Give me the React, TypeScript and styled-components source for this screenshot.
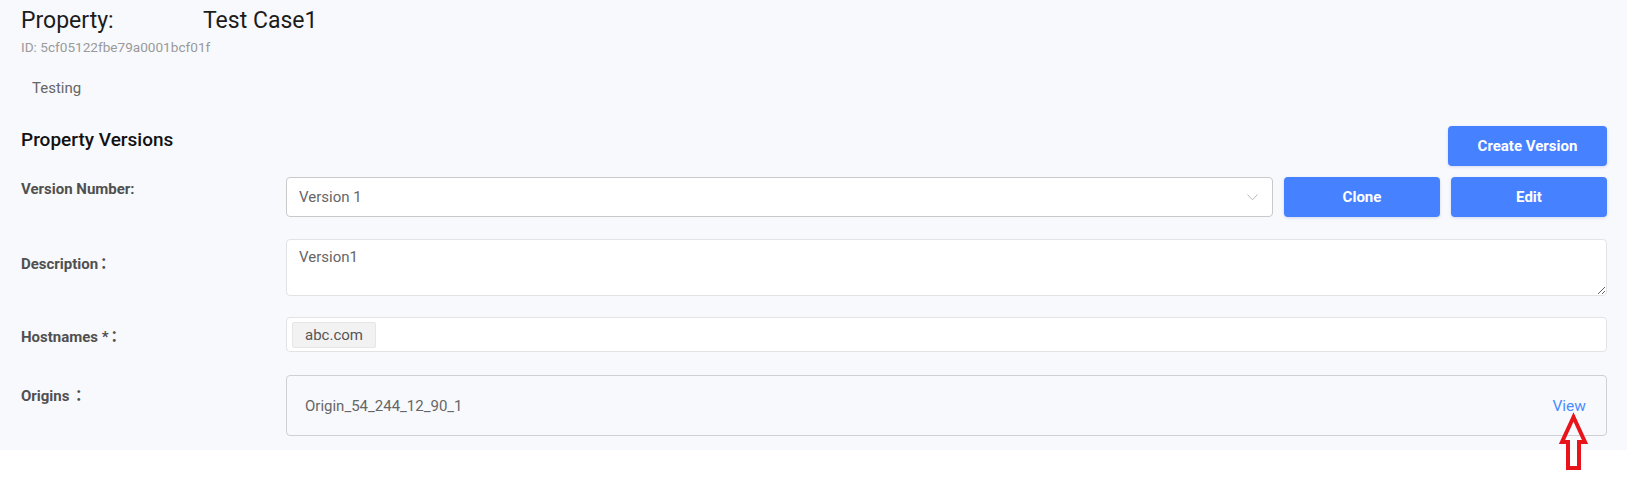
import React from "react";
import styled, { createGlobalStyle } from "styled-components";

const GlobalStyle = createGlobalStyle`
  html, body { margin: 0; padding: 0; background: #ffffff; }
  body { font-family: Roboto, "Noto Sans CJK SC", sans-serif; }
  * { box-sizing: border-box; }
`;

const Screen = styled.div`
  position: relative;
  min-height: 100vh;
  background: #ffffff;
`;

const Page = styled.div`
  background: #f8f9fd;
  padding: 7px 20px 14px 21px;
  font-family: Roboto, "Noto Sans CJK SC", sans-serif;
`;

const TitleRow = styled.div`
  display: grid;
  grid-template-columns: 182px auto;
  align-items: baseline;
`;

const TitleText = styled.span`
  font-size: 23px;
  color: #1c1c1c;
  line-height: normal;
`;

const IdText = styled.div`
  margin-top: 5px;
  font-size: 13.6px;
  color: #9a9a9a;
  line-height: normal;
`;

const Tagline = styled.div`
  margin-top: 24px;
  padding-left: 11px;
  font-size: 15px;
  color: #666;
  line-height: normal;
`;

const SectionHead = styled.div`
  margin-top: 29px;
  display: flex;
  justify-content: space-between;
  align-items: flex-start;
`;

const SectionTitle = styled.h2`
  margin: 2px 0 0;
  font-size: 19px;
  font-weight: 500;
  color: #111;
  line-height: normal;
`;

const Button = styled.button<{ $w: number }>`
  width: ${(p) => p.$w}px;
  height: 40px;
  flex: none;
  border: none;
  border-radius: 4px;
  background: #4682ff;
  color: #fff;
  font-family: Roboto, sans-serif;
  font-size: 15px;
  font-weight: 700;
  box-shadow: 0 1px 3px rgba(40, 80, 160, 0.18);
  cursor: pointer;
`;

const FormRow = styled.div<{ $mt: number }>`
  margin-top: ${(p) => p.$mt}px;
  display: grid;
  grid-template-columns: 265px 1fr;
  align-items: start;
`;

const Label = styled.label<{ $pt: number }>`
  padding-top: ${(p) => p.$pt}px;
  font-size: 15px;
  font-weight: 700;
  color: #505050;
  line-height: normal;
`;

const Colon = styled.span`
  font-family: "Noto Sans CJK TC", sans-serif;
  font-weight: 700;
  margin-left: -2px;
`;

const Field = styled.div`
  display: flex;
  gap: 11px;
  align-items: center;
`;

const Select = styled.div`
  flex: 1;
  height: 40px;
  display: flex;
  align-items: center;
  justify-content: space-between;
  padding: 0 14px 0 12px;
  background: #fff;
  border: 1px solid #c9c9c9;
  border-radius: 4px;
  font-size: 15px;
  color: #666;
`;

const TextArea = styled.textarea`
  display: block;
  width: 100%;
  height: 57px;
  padding: 8px 12px;
  background: #fff;
  border: 1px solid #e3e3e6;
  border-radius: 4px;
  font-family: Roboto, sans-serif;
  font-size: 15px;
  color: #666;
  outline: none;
  resize: vertical;
`;

const TagInput = styled.div`
  height: 35px;
  display: flex;
  align-items: center;
  gap: 6px;
  padding: 0 5px;
  background: #fff;
  border: 1px solid #e3e3e6;
  border-radius: 4px;
`;

const Tag = styled.span`
  height: 26px;
  display: inline-flex;
  align-items: center;
  padding: 0 12px;
  background: #f2f2f2;
  border: 1px solid #e6e6e6;
  border-radius: 2px;
  font-size: 15px;
  color: #555;
`;

const OriginBox = styled.div`
  height: 61px;
  display: flex;
  align-items: center;
  justify-content: space-between;
  padding: 0 20px 0 18px;
  background: #f8f9fd;
  border: 1px solid #cfd0d6;
  border-radius: 4px;
  font-size: 15px;
  color: #666;
`;

const ViewLink = styled.a`
  color: #4a8cff;
  font-size: 15.5px;
  text-decoration: none;
  cursor: pointer;
`;

const Annotation = styled.svg`
  position: absolute;
  left: 1557px;
  top: 412px;
  overflow: visible;
  z-index: 2;
`;

const Chevron = () => (
  <svg width="11" height="7" viewBox="0 0 11 7">
    <path d="M0.5 0.5 L5.5 5.8 L10.5 0.5" fill="none" stroke="#b8b8b8" strokeWidth="1" />
  </svg>
);

export default function App() {
  return (
    <Screen>
      <GlobalStyle />
      <Page>
        <TitleRow>
          <TitleText>Property:</TitleText>
          <TitleText>Test Case1</TitleText>
        </TitleRow>
        <IdText>ID: 5cf05122fbe79a0001bcf01f</IdText>
        <Tagline>Testing</Tagline>

        <SectionHead>
          <SectionTitle>Property Versions</SectionTitle>
          <Button $w={159}>Create Version</Button>
        </SectionHead>

        <FormRow $mt={11}>
          <Label $pt={3}>Version Number:</Label>
          <Field>
            <Select>
              <span>Version 1</span>
              <Chevron />
            </Select>
            <Button $w={156}>Clone</Button>
            <Button $w={156}>Edit</Button>
          </Field>
        </FormRow>

        <FormRow $mt={22}>
          <Label $pt={13}>
            Description<Colon>：</Colon>
          </Label>
          <TextArea readOnly value="Version1" />
        </FormRow>

        <FormRow $mt={21}>
          <Label $pt={8}>
            Hostnames *<Colon>：</Colon>
          </Label>
          <TagInput>
            <Tag>abc.com</Tag>
          </TagInput>
        </FormRow>

        <FormRow $mt={23}>
          <Label $pt={9}>
            Origins <Colon>：</Colon>
          </Label>
          <OriginBox>
            <span>Origin_54_244_12_90_1</span>
            <ViewLink>View</ViewLink>
          </OriginBox>
        </FormRow>
      </Page>

      <Annotation width="34" height="62" viewBox="0 0 34 62">
        <path
          d="M16.5 5 L5 30 L11 30 L11 56 L22 56 L22 30 L28 30 Z"
          fill="none"
          stroke="#e8141c"
          strokeWidth="4"
          strokeLinejoin="miter"
        />
      </Annotation>
    </Screen>
  );
}
